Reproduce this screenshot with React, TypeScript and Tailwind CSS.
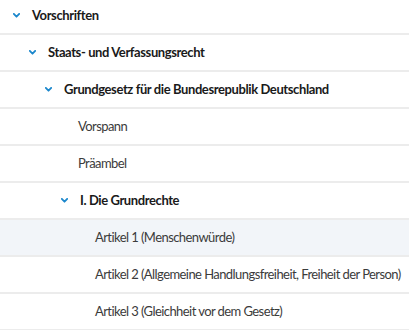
type Row = { label: string; bold?: boolean; chevron?: boolean; pl: number; active?: boolean };

const rows: Row[] = [
  { label: "Vorschriften", bold: true, chevron: true, pl: 13 },
  { label: "Staats- und Verfassungsrecht", bold: true, chevron: true, pl: 29 },
  { label: "Grundgesetz für die Bundesrepublik Deutschland", bold: true, chevron: true, pl: 45 },
  { label: "Vorspann", pl: 78 },
  { label: "Präambel", pl: 78 },
  { label: "I. Die Grundrechte", bold: true, chevron: true, pl: 61 },
  { label: "Artikel 1 (Menschenwürde)", pl: 95, active: true },
  { label: "Artikel 2 (Allgemeine Handlungsfreiheit, Freiheit der Person)", pl: 95 },
  { label: "Artikel 3 (Gleichheit vor dem Gesetz)", pl: 95 },
];

function Chevron() {
  return (
    <svg width="7" height="5" viewBox="0 0 7 5" className="shrink-0 mr-[12px]">
      <path d="M0.8 0.9 L3.5 3.7 L6.2 0.9" fill="none" stroke="#1b87cc" strokeWidth="1.8" strokeLinecap="round" strokeLinejoin="round" />
    </svg>
  );
}

export default function App() {
  return (
    <div className="w-[409px] h-[330px] overflow-hidden bg-white font-['Lato',sans-serif] text-[13px]">
      <div className="-mt-[2px] flex flex-col">
        {rows.map((r) => (
          <div
            key={r.label}
            className={`flex items-center h-[37px] border-b-2 border-[#ececec] whitespace-nowrap ${r.active ? "bg-[#f2f5f9]" : "bg-white"}`}
            style={{ paddingLeft: r.pl }}
          >
            {r.chevron && <Chevron />}
            <span
              className={
                r.bold
                  ? "font-bold text-[#1a1a1a] tracking-[-0.4px]"
                  : "text-[#3b3b3b] tracking-[-0.57px]"
              }
            >
              {r.label}
            </span>
          </div>
        ))}
      </div>
    </div>
  );
}
